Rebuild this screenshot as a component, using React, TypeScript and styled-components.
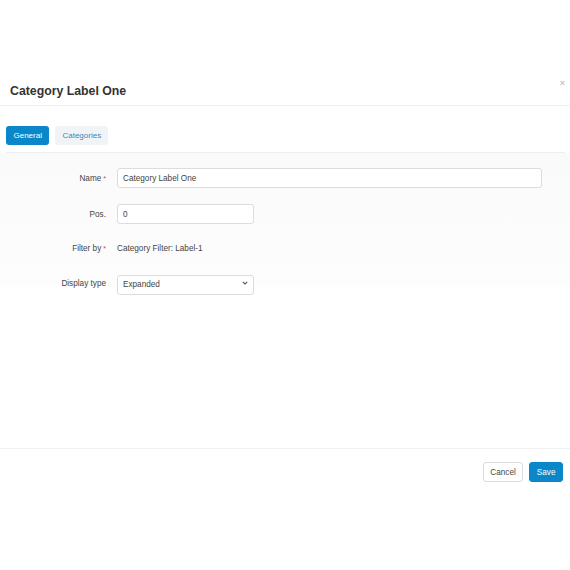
import React, { useState } from 'react'
import styled, { createGlobalStyle } from 'styled-components'

const GlobalStyle = createGlobalStyle`
  html, body {
    margin: 0;
    padding: 0;
    background: #fff;
  }
  body {
    font-family: 'Liberation Sans', Arial, sans-serif;
    color: #333;
  }
`

const Page = styled.div`
  width: 570px;
  height: 570px;
  background: #fff;
  padding-top: 70px;
  box-sizing: border-box;
`

const Modal = styled.div`
  display: flex;
  flex-direction: column;
`

const Header = styled.div`
  position: relative;
  height: 35px;
  padding: 0 10px;
  display: flex;
  align-items: center;
  border-bottom: 1px solid #f1f1f1;
`

const Title = styled.h3`
  margin: 0;
  margin-top: 6px;
  font-size: 12.3px;
  font-weight: 700;
  color: #333;
`

const Close = styled.button`
  position: absolute;
  right: 5px;
  top: 8px;
  border: none;
  background: none;
  padding: 0;
  color: #c4c4c4;
  font-family: 'Liberation Sans', Arial, sans-serif;
  font-size: 9px;
  font-weight: 700;
  line-height: 10px;
  cursor: pointer;
`

const Body = styled.div`
  height: 342px;
  padding-top: 20px;
  box-sizing: border-box;
`

const TabBar = styled.div`
  display: flex;
  gap: 6px;
  margin: 0 5px 0 6px;
  padding-bottom: 7px;
  border-bottom: 1px solid #eceff1;
`

const Tab = styled.button<{ $active?: boolean }>`
  height: 19px;
  padding: 0 ${(p) => (p.$active ? '7.5px' : '7px')};
  border: none;
  border-radius: 3px;
  font-family: 'Liberation Sans', Arial, sans-serif;
  font-size: 8px;
  cursor: pointer;
  background: ${(p) => (p.$active ? '#0a87c9' : '#f1f4f7')};
  color: ${(p) => (p.$active ? '#fff' : '#3a86bd')};
`

const FormArea = styled.div`
  padding-top: 15px;
  height: 134px;
  box-sizing: border-box;
  background: linear-gradient(#fafafa, #fdfdfd);
  display: flex;
  flex-direction: column;
  gap: 15px;
`

const Row = styled.div<{ $nudge?: number }>`
  display: grid;
  grid-template-columns: 106px 1fr;
  column-gap: 11px;
  align-items: center;
  height: 20px;
  flex-shrink: 0;
  margin-top: ${(p) => p.$nudge || 0}px;
`

const Label = styled.label`
  text-align: right;
  font-size: 8.2px;
  color: #444;
`

const Req = styled.span`
  color: #e03a3a;
  margin-left: 2px;
  font-size: 7px;
`

const Input = styled.input<{ $w?: number }>`
  width: ${(p) => (p.$w ? `${p.$w}px` : '425px')};
  height: 20px;
  box-sizing: border-box;
  border: 1px solid #dcdcdc;
  border-radius: 3px;
  background: #fff;
  padding: 0 5px;
  font-family: 'Liberation Sans', Arial, sans-serif;
  font-size: 8.2px;
  color: #444;
  outline: none;
`

const StaticText = styled.div`
  font-size: 8.2px;
  color: #444;
`

const SelectWrap = styled.div`
  position: relative;
  width: 137px;
  height: 20px;
`

const Select = styled.select`
  width: 100%;
  height: 20px;
  box-sizing: border-box;
  appearance: none;
  border: 1px solid #dcdcdc;
  border-radius: 3px;
  background: #fff;
  padding: 0 5px;
  font-family: 'Liberation Sans', Arial, sans-serif;
  font-size: 8.2px;
  color: #444;
  outline: none;
`

const Chevron = styled.svg`
  position: absolute;
  right: 6px;
  top: 8px;
  pointer-events: none;
`

const Footer = styled.div`
  border-top: 1px solid #f1f1f1;
  display: flex;
  justify-content: flex-end;
  gap: 6px;
  padding: 13px 7px 0 0;
`

const Button = styled.button<{ $primary?: boolean }>`
  height: 20px;
  padding: 0 6.5px;
  border-radius: 3px;
  font-family: 'Liberation Sans', Arial, sans-serif;
  font-size: 8.2px;
  cursor: pointer;
  border: 1px solid ${(p) => (p.$primary ? '#0a87c9' : '#dcdcdc')};
  background: ${(p) => (p.$primary ? '#0a87c9' : '#fff')};
  color: ${(p) => (p.$primary ? '#fff' : '#444')};
`

const App = () => {
  let [tab, setTab] = useState('general')
  let [name, setName] = useState('Category Label One')
  let [pos, setPos] = useState('0')
  let [display, setDisplay] = useState('expanded')

  return (
    <Page>
      <GlobalStyle />
      <Modal>
        <Header>
          <Title>Category Label One</Title>
          <Close aria-label="Close">×</Close>
        </Header>
        <Body>
          <TabBar>
            <Tab $active={tab === 'general'} onClick={() => setTab('general')}>
              General
            </Tab>
            <Tab
              $active={tab === 'categories'}
              onClick={() => setTab('categories')}
            >
              Categories
            </Tab>
          </TabBar>
          <FormArea>
            <Row>
              <Label>
                Name<Req>*</Req>
              </Label>
              <Input value={name} onChange={(e) => setName(e.target.value)} />
            </Row>
            <Row $nudge={1}>
              <Label>Pos.</Label>
              <Input
                $w={137}
                value={pos}
                onChange={(e) => setPos(e.target.value)}
              />
            </Row>
            <Row $nudge={-1}>
              <Label>
                Filter by<Req>*</Req>
              </Label>
              <StaticText>Category Filter: Label-1</StaticText>
            </Row>
            <Row>
              <Label>Display type</Label>
              <SelectWrap>
                <Select
                  value={display}
                  onChange={(e) => setDisplay(e.target.value)}
                >
                  <option value="expanded">Expanded</option>
                  <option value="collapsed">Collapsed</option>
                </Select>
                <Chevron width="6" height="4" viewBox="0 0 6 4">
                  <path
                    d="M0.8 0.8l2.2 2.2L5.2 0.8"
                    fill="none"
                    stroke="#555"
                    strokeWidth="1.1"
                  />
                </Chevron>
              </SelectWrap>
            </Row>
          </FormArea>
        </Body>
        <Footer>
          <Button>Cancel</Button>
          <Button $primary>Save</Button>
        </Footer>
      </Modal>
    </Page>
  )
}

export default App
